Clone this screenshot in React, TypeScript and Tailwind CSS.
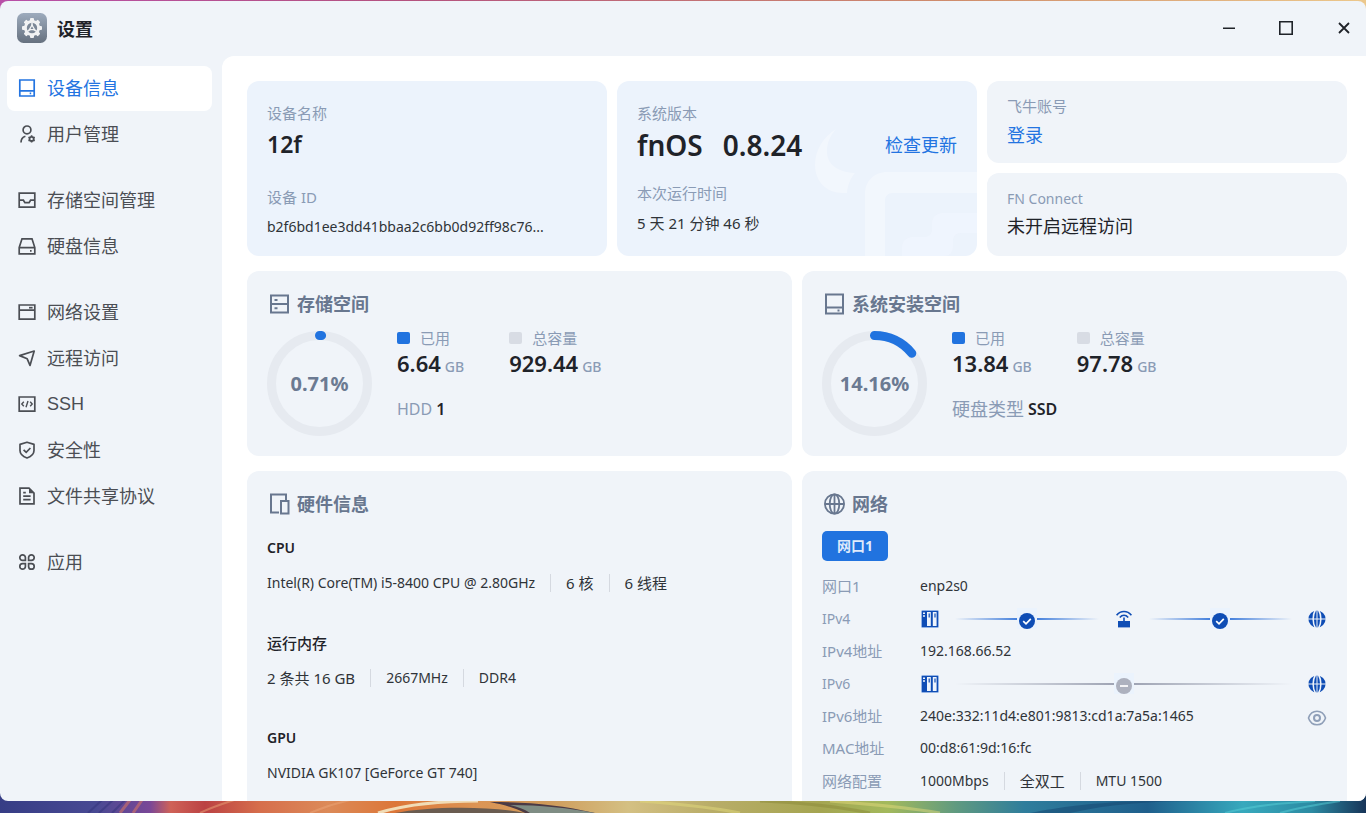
import type { ReactNode } from "react";

type IconProps = { children: ReactNode; className?: string };

function Icon({ children, className = "size-[18px]" }: IconProps) {
  return (
    <svg
      viewBox="0 0 18 18"
      className={`shrink-0 ${className}`}
      fill="none"
      stroke="currentColor"
      strokeWidth="1.7"
      aria-hidden="true"
    >
      {children}
    </svg>
  );
}

const icons = {
  device: (
    <Icon>
      <path d="M1.8 1h14.4v16H1.8zM1.8 11.8h14.4" />
      <path d="M11.7 14.4h1.5" />
    </Icon>
  ),
  user: (
    <Icon>
      <circle cx="9" cy="4.9" r="3.9" />
      <path d="M3 17.6c0-3.4 1.6-5.6 4.4-6.4" />
      <circle cx="13.6" cy="13.9" r="2.1" strokeWidth="1.8" />
      <path
        strokeWidth="1.6"
        d="M13.6 10.3v1.2M13.6 16.3v1.2M10.5 12.1l1 .6M15.7 15.1l1 .6M10.5 15.7l1-.6M15.7 12.7l1-.6"
      />
    </Icon>
  ),
  inbox: (
    <Icon>
      <path d="M1.2 2.2h15.6v14H1.2z" />
      <path d="M1.2 9.2h4.2l1.5 2.4h4.2l1.5-2.4h4.2" />
    </Icon>
  ),
  disk: (
    <Icon>
      <path d="M1.2 10.6 4 1.8h10l2.8 8.8v6.2H1.2zM1.2 10.6h15.6" />
      <path d="M12 13.8h1.6" />
    </Icon>
  ),
  window: (
    <Icon>
      <path d="M1.2 2h15.6v14.2H1.2zM1.2 7.2h15.6" />
      <path d="M11 4.7h3.6" />
    </Icon>
  ),
  send: (
    <Icon>
      <path d="M1.6 6.6 16.2 2 12 16.4 9.2 9.8z" strokeLinejoin="round" />
    </Icon>
  ),
  code: (
    <Icon>
      <path d="M1.2 2h15.6v14.2H1.2z" />
      <path d="M5.8 6.8 3.8 9l2 2.2M12.2 6.8l2 2.2-2 2.2M10 6l-2 6.2" strokeWidth="1.4" />
    </Icon>
  ),
  shield: (
    <Icon>
      <path d="M9 1.2 16 3.4v6c0 3.6-3 6-7 7.6-4-1.6-7-4-7-7.6v-6z" strokeLinejoin="round" />
      <path d="M5.6 8.8 8.2 11.4l4.2-4.4" />
    </Icon>
  ),
  file: (
    <Icon>
      <path d="M2 1.2h9l5 5v10.6H2z" />
      <path d="M11 1.4v4.8h4.8z" fill="currentColor" stroke="none" />
      <path d="M5.2 5.6h2.6M5.2 9.2h7.4M5.2 12.6h7.4" />
    </Icon>
  ),
  apps: (
    <Icon>
      <path d="M7.4 7.4H4.6A2.8 2.8 0 1 1 7.4 4.6zM10.6 7.4V4.6a2.8 2.8 0 1 1 2.8 2.8zM7.4 10.6v2.8a2.8 2.8 0 1 1-2.8-2.8zM10.6 10.6h2.8a2.8 2.8 0 1 1-2.8 2.8z" />
    </Icon>
  ),
};

const navGroups: { label: string; icon: ReactNode; active?: boolean; latin?: boolean }[][] = [
  [
    { label: "设备信息", icon: icons.device, active: true },
    { label: "用户管理", icon: icons.user },
  ],
  [
    { label: "存储空间管理", icon: icons.inbox },
    { label: "硬盘信息", icon: icons.disk },
  ],
  [
    { label: "网络设置", icon: icons.window },
    { label: "远程访问", icon: icons.send },
    { label: "SSH", icon: icons.code, latin: true },
    { label: "安全性", icon: icons.shield },
    { label: "文件共享协议", icon: icons.file },
  ],
  [{ label: "应用", icon: icons.apps }],
];

function Wallpaper() {
  return (
    <svg
      className="absolute inset-0 size-full"
      viewBox="0 0 1366 813"
      preserveAspectRatio="none"
      aria-hidden="true"
    >
      <defs>
        <linearGradient id="sky">
          <stop offset="0" stopColor="#b84fa8" />
          <stop offset=".3" stopColor="#b4527f" />
          <stop offset=".7" stopColor="#cf8d6c" />
          <stop offset="1" stopColor="#ecc88c" />
        </linearGradient>
        <linearGradient id="ground">
          <stop offset="0" stopColor="#363d85" />
          <stop offset=".07" stopColor="#484993" />
          <stop offset=".11" stopColor="#7a4797" />
          <stop offset=".125" stopColor="#cf6257" />
          <stop offset=".15" stopColor="#bb4243" />
          <stop offset=".19" stopColor="#d66e4c" />
          <stop offset=".24" stopColor="#dc8a58" />
          <stop offset=".29" stopColor="#dc7638" />
          <stop offset=".35" stopColor="#dc9555" />
          <stop offset=".4" stopColor="#cf9a5a" />
          <stop offset=".46" stopColor="#d4c083" />
          <stop offset=".52" stopColor="#b9ad68" />
          <stop offset=".6" stopColor="#a5a551" />
          <stop offset=".65" stopColor="#a3b95c" />
          <stop offset=".7" stopColor="#5f9a80" />
          <stop offset=".75" stopColor="#2f7d9c" />
          <stop offset=".84" stopColor="#1f5f8c" />
          <stop offset=".91" stopColor="#37a9bd" />
          <stop offset=".96" stopColor="#2c8ba3" />
          <stop offset="1" stopColor="#173458" />
        </linearGradient>
      </defs>
      <rect width="1366" height="400" fill="url(#sky)" />
      <rect y="400" width="1366" height="413" fill="url(#ground)" />
      <g fill="none" opacity=".5">
        <path d="M88 813l14-13M99 813l14-13M112 813l13-13" stroke="#33337c" strokeWidth="2" />
        <path d="M120 813l10-13M133 813l9-13" stroke="#e67a5c" strokeWidth="3" />
        <path d="M200 813c12-6 22-9 34-13M310 813c14-6 22-9 40-13" stroke="#eba578" strokeWidth="2" />
        <path d="M640 801c40 3 70 6 100 12M830 801c40 3 80 7 110 12" stroke="#e2da7c" strokeWidth="3" />
        <path d="M760 801c50 2 80 6 110 12" stroke="#8c8a3a" strokeWidth="3" />
        <path d="M1225 813c30-8 60-10 90-12M1280 813c20-6 40-9 60-12" stroke="#57d0d8" strokeWidth="2" />
      </g>
      <path d="M378 813c26-8 58-12 100-12" fill="none" stroke="#f1dcb6" strokeWidth="3" />
      <path d="M395 813c30-6 90-8 130 0z" fill="#6a5c50" />
      <path d="M490 802c40 0 70 3 105 11h-70c-10-5-20-8-35-11z" fill="#4b3a44" />
      <path d="M530 813c-6-4-12-6-20-8 30 0 60 3 85 8z" fill="#7f8d84" />
      <path d="M1070 813c40-9 80-12 130-12h-60c-50 2-80 6-110 12z" fill="#174b74" opacity=".6" />
    </svg>
  );
}

function AppLogo() {
  return (
    <svg viewBox="0 0 30 30" className="size-[30px] shrink-0" aria-hidden="true">
      <defs>
        <linearGradient id="logo" x1="0" y1="0" x2="0" y2="1">
          <stop offset="0" stopColor="#9dabbd" />
          <stop offset="1" stopColor="#66717f" />
        </linearGradient>
      </defs>
      <rect width="30" height="30" rx="6.5" fill="url(#logo)" />
      <g fill="#f1f2f3">
        {[0, 45, 90, 135].map((angle) => (
          <rect key={angle} x="13" y="5" width="4" height="20" rx="1" transform={`rotate(${angle} 15 15)`} />
        ))}
        <circle cx="15" cy="15" r="8" />
      </g>
      <circle cx="15" cy="15" r="5.2" fill="#7c8897" />
      <path d="M15 9.6v4M10.4 18.4l3-2M19.6 18.4l-3-2" stroke="#f1f2f3" strokeWidth="1.5" />
      <path d="M15 12l2.6 4.6h-5.2z" fill="none" stroke="#f1f2f3" strokeWidth="1.3" />
    </svg>
  );
}

function TitleBar() {
  return (
    <header className="flex h-[55px] shrink-0 items-center pb-0.5 pl-[17px]">
      <AppLogo />
      <h1 className="ml-2.5 pt-0.5 text-lg leading-6 font-bold text-[#1f2329]">设置</h1>
      <div className="ml-auto flex items-center text-[#1f2329]">
        <button type="button" aria-label="最小化" className="flex h-10 w-[57px] items-center justify-center">
          <svg viewBox="0 0 16 16" className="size-4" stroke="currentColor" strokeWidth="1.6" fill="none">
            <path d="M2 8.2h12" />
          </svg>
        </button>
        <button type="button" aria-label="最大化" className="flex h-10 w-[57px] items-center justify-center">
          <svg viewBox="0 0 16 16" className="size-4" stroke="currentColor" strokeWidth="1.6" fill="none">
            <path d="M1.8 1.8h12.4v12.4H1.8z" />
          </svg>
        </button>
        <button type="button" aria-label="关闭" className="flex h-10 w-[52px] items-center justify-center pl-2">
          <svg viewBox="0 0 16 16" className="size-4" stroke="currentColor" strokeWidth="1.8" fill="none">
            <path d="M3 3l10 10M13 3L3 13" />
          </svg>
        </button>
      </div>
    </header>
  );
}

function Sidebar() {
  return (
    <nav className="flex w-[222px] shrink-0 flex-col gap-[21px] overflow-hidden pt-2.5 pr-2.5 pl-[7px]">
      {navGroups.map((group, index) => (
        <ul key={index} className="flex flex-col gap-px">
          {group.map((item) => (
            <li key={item.label}>
              <a
                href="#"
                aria-current={item.active ? "page" : undefined}
                className={`flex h-[45px] items-center gap-[11px] rounded-lg pb-px pl-[11px] text-lg ${
                  item.active ? "bg-white text-[#2374e1]" : "text-[#4b4e54]"
                }`}
              >
                {item.icon}
                <span className={item.latin ? "font-['Liberation_Sans',sans-serif]" : ""}>{item.label}</span>
              </a>
            </li>
          ))}
        </ul>
      ))}
    </nav>
  );
}

function Label({ children }: { children: ReactNode }) {
  return <div className="text-[15px] leading-5 text-[#8a9bb5]">{children}</div>;
}

function Watermark() {
  return (
    <svg
      viewBox="0 0 360 175"
      className="pointer-events-none absolute right-0 bottom-0 h-[175px] w-[360px]"
      aria-hidden="true"
    >
      <g fill="#ffffff" fillOpacity=".32">
        <path d="M219 48c-13 8-21 21-21 36 0 17 12 28 27 28h5c1-8 3-14 8-20-18-1-28-9-28-22 0-8 3-15 9-22z" />
        <path d="M248 175v-62c0-13 9-22 22-22h90v21h-84c-5 0-8 3-8 8v55z" />
      </g>
      <path
        d="M285 175v-8c0-7 4-11 11-11h11c5 0 8-3 8-8v-5c0-7 4-11 11-11h34v20h-16c-5 0-8 3-8 8v5c0 6-3 10-9 10z"
        fill="#f3f6ff"
        fillOpacity=".55"
      />
    </svg>
  );
}

function Overview() {
  return (
    <section className="grid grid-cols-3 gap-2.5">
      <div className="min-w-0 rounded-xl bg-[#ecf3fc] px-5 pt-[22px] pb-[17px]">
        <Label>设备名称</Label>
        <div className="mt-[3px] text-[23px] leading-9 font-semibold text-[#1f2329]">12f</div>
        <div className="mt-[25px]">
          <Label>设备 ID</Label>
        </div>
        <div className="mt-2 truncate text-sm leading-6 text-[#2f3338]">
          b2f6bd1ee3dd41bbaa2c6bb0d92ff98c76...
        </div>
      </div>

      <div className="relative min-w-0 overflow-hidden rounded-xl bg-[#ecf3fc] px-5 pt-[22px] pb-[17px]">
        <Watermark />
        <Label>系统版本</Label>
        <div className="mt-0.5 flex items-center justify-between leading-10">
          <div className="flex gap-5 text-[28px] font-semibold text-[#1f2329]">
            <span>fnOS</span>
            <span>0.8.24</span>
          </div>
          <button type="button" className="relative text-lg leading-6 text-[#2374e1]">
            检查更新
          </button>
        </div>
        <div className="mt-[18px]">
          <Label>本次运行时间</Label>
        </div>
        <div className="mt-2 text-[15px] leading-6 text-[#2f3338]">5 天 21 分钟 46 秒</div>
      </div>

      <div className="flex min-w-0 flex-col gap-2.5">
        <div className="flex-1 rounded-xl bg-[#f0f4f9] px-5 pt-[15px]">
          <Label>飞牛账号</Label>
          <button type="button" className="mt-[7px] block text-lg leading-6 text-[#2374e1]">
            登录
          </button>
        </div>
        <div className="flex-1 rounded-xl bg-[#f0f4f9] px-5 pt-4">
          <div className="text-sm leading-5 text-[#8a9bb5]">FN Connect</div>
          <div className="mt-[5px] text-lg leading-6 text-[#1f2329]">未开启远程访问</div>
        </div>
      </div>
    </section>
  );
}

function CardTitle({ icon, children }: { icon: ReactNode; children: ReactNode }) {
  return (
    <h2 className="flex h-6 items-center gap-1.5 text-lg leading-6 font-bold text-[#68778f]">
      <svg
        viewBox="0 0 24 24"
        className="size-6 shrink-0"
        fill="none"
        stroke="currentColor"
        strokeWidth="2"
        aria-hidden="true"
      >
        {icon}
      </svg>
      {children}
    </h2>
  );
}

function Ring({ percent, shown }: { percent: number; shown: string }) {
  return (
    <div className="grid size-[105px] shrink-0 place-items-center">
      <svg
        viewBox="0 0 105 105"
        className="col-start-1 row-start-1 size-full"
        fill="none"
        strokeWidth="9"
        aria-hidden="true"
      >
        <circle cx="52.5" cy="52.5" r="48" stroke="#e6eaf0" />
        <circle
          cx="52.5"
          cy="52.5"
          r="48"
          stroke="#2173df"
          strokeLinecap="round"
          pathLength="100"
          strokeDasharray={`${percent} 100`}
          transform="rotate(-90 52.5 52.5)"
        />
      </svg>
      <span className="col-start-1 row-start-1 text-xl leading-6 font-bold text-[#6b7a92]">{shown}</span>
    </div>
  );
}

function Stat({ label, value, used }: { label: string; value: string; used?: boolean }) {
  return (
    <div>
      <div className="flex h-3.5 items-center gap-2.5 text-[15px] text-[#8a9bb5]">
        <span className={`h-3 w-[13px] rounded-[2px] ${used ? "bg-[#2173df]" : "bg-[#d8dce4]"}`} />
        {label}
      </div>
      <div className="mt-0.5 flex items-baseline gap-1 text-[22px] leading-8 font-semibold text-[#1f2329]">
        {value}
        <span className="text-sm font-medium text-[#8a9bb5]">GB</span>
      </div>
    </div>
  );
}

type SpaceCardProps = {
  title: string;
  icon: ReactNode;
  percent: number;
  shown: string;
  used: string;
  total: string;
  footer: ReactNode;
};

function SpaceCard({ title, icon, percent, shown, used, total, footer }: SpaceCardProps) {
  return (
    <section className="min-w-0 rounded-xl bg-[#f0f4f9] px-5 pt-[21px] pb-5">
      <CardTitle icon={icon}>{title}</CardTitle>
      <div className="mt-[15px] flex gap-[25px]">
        <Ring percent={percent} shown={shown} />
        <div>
          <div className="flex gap-[45px]">
            <Stat label="已用" value={used} used />
            <Stat label="总容量" value={total} />
          </div>
          <div className="mt-[18px] flex items-center gap-1 leading-6">{footer}</div>
        </div>
      </div>
    </section>
  );
}

type Part = { text: string; latin?: boolean };

function Parts({ items }: { items: Part[] }) {
  return (
    <div className="flex h-5 items-center text-[#2f3338]">
      {items.map((item, index) => (
        <div key={item.text} className="flex items-center">
          {index > 0 && <span className="mx-[15px] h-[18px] w-px bg-[#d5d9e0]" />}
          <span className={item.latin ? "text-sm leading-5" : "text-[15px] leading-5"}>{item.text}</span>
        </div>
      ))}
    </div>
  );
}

const hardware: { name: string; latin?: boolean; parts: Part[] }[] = [
  {
    name: "CPU",
    latin: true,
    parts: [
      { text: "Intel(R) Core(TM) i5-8400 CPU @ 2.80GHz", latin: true },
      { text: "6 核" },
      { text: "6 线程" },
    ],
  },
  {
    name: "运行内存",
    parts: [{ text: "2 条共 16 GB" }, { text: "2667MHz", latin: true }, { text: "DDR4", latin: true }],
  },
  { name: "GPU", latin: true, parts: [{ text: "NVIDIA GK107 [GeForce GT 740]", latin: true }] },
];

function HardwareCard() {
  return (
    <section className="min-w-0 rounded-xl bg-[#f0f4f9] px-5 pt-[21px] pb-10">
      <CardTitle icon={<path d="M12 20.5H4v-18h15v6M14 9h7.5v12.500H14z" />}>硬件信息</CardTitle>
      <dl className="mt-[22px] flex flex-col gap-10">
        {hardware.map((item) => (
          <div key={item.name}>
            <dt
              className={`leading-5 text-[#1f2329] ${
                item.latin ? "text-sm font-semibold" : "text-[15px] font-medium"
              }`}
            >
              {item.name}
            </dt>
            <dd className="mt-[15px]">
              <Parts items={item.parts} />
            </dd>
          </div>
        ))}
      </dl>
    </section>
  );
}

function ServerIcon() {
  return (
    <svg viewBox="0 0 20 20" className="size-5 shrink-0" aria-hidden="true">
      <rect x="1" y="1" width="18" height="18" rx="1.5" fill="#b4cdf2" />
      <rect x="1.8" y="1.8" width="16.4" height="16.4" fill="#0f4db5" />
      <path d="M7 3h3.8v14H7zM12.8 3h3.8v14h-3.8z" fill="#eef4fc" />
      <path d="M9.2 4.4v4M15 4.4v4" stroke="#0f4db5" strokeWidth="1.2" />
      <path d="M3 4.2h2M3 7h2" stroke="#eef4fc" strokeWidth="1.4" />
    </svg>
  );
}

function RouterIcon() {
  return (
    <svg
      viewBox="0 0 20 20"
      className="size-5 shrink-0"
      fill="none"
      stroke="#0f4db5"
      strokeWidth="1.6"
      aria-hidden="true"
    >
      <path d="M2.6 6.2c4-5 10.8-5 14.8 0M5.8 8.4c2.4-2.8 6-2.8 8.4 0" />
      <path d="M10 8.6v4" />
      <path d="M4 12h12v6.4H4z" fill="#0f4db5" stroke="none" />
    </svg>
  );
}

function SolidGlobe() {
  return (
    <svg viewBox="0 0 20 20" className="size-5 shrink-0" aria-hidden="true">
      <circle cx="10" cy="10" r="8.6" fill="#0f4db5" />
      <path d="M1 10h18M10 1v18" stroke="#f0f4f9" strokeWidth="1" />
      <path
        d="M8.400 1c-3 5-3 13 0 18M11.600 1c3 5 3 13 0 18"
        fill="none"
        stroke="#f0f4f9"
        strokeWidth="1.5"
      />
    </svg>
  );
}

function Link({ ok }: { ok: boolean }) {
  return (
    <div className="flex h-5 flex-1 items-center">
      <span className={`h-0.5 flex-1 bg-linear-to-r from-transparent ${ok ? "to-[#4580dc]" : "to-[#9fa4b4]"}`} />
      <span className="w-5 bg-[#ebf3fd] px-0.5 pt-[5px]">
        <svg viewBox="0 0 16 16" className="size-4" fill="none" stroke="#ffffff" aria-hidden="true">
          <circle cx="8" cy="8" r="8" fill={ok ? "#0f4db5" : "#adb1be"} stroke="none" />
          {ok ? <path d="M4.2 8.2 7 10.8l4.8-5" strokeWidth="1.7" /> : <path d="M4 8h8" strokeWidth="1.7" />}
        </svg>
      </span>
      <span className={`h-0.5 flex-1 bg-linear-to-l from-transparent ${ok ? "to-[#4580dc]" : "to-[#9fa4b4]"}`} />
    </div>
  );
}

type RowProps = { label: string; tall?: boolean; latin?: boolean; children: ReactNode };

function Row({ label, tall, latin, children }: RowProps) {
  return (
    <div className={`flex items-center ${tall ? "h-[33px]" : "h-8"}`}>
      <dt className={`w-[98px] shrink-0 leading-5 text-[#8a9bb5] ${latin ? "text-sm" : "text-[15px]"}`}>
        {label}
      </dt>
      <dd className="min-w-0 flex-1 text-sm leading-5 text-[#2f3338]">{children}</dd>
    </div>
  );
}

function NetworkCard() {
  return (
    <section className="min-w-0 rounded-xl bg-[#f0f4f9] px-5 pt-[21px] pb-10">
      <CardTitle
        icon={
          <g strokeWidth="1.8">
            <circle cx="12.500" cy="12" r="9.600" />
            <path d="M3 12h19M12.500 2.400v19.200" />
            <ellipse cx="12.500" cy="12" rx="4.800" ry="9.600" />
          </g>
        }
      >
        网络
      </CardTitle>
      <button
        type="button"
        className="mt-[15px] flex h-[30px] w-[66px] items-center justify-center rounded-[5px] bg-[#2173df] text-sm font-bold text-[#dfeafb]"
      >
        网口1
      </button>
      <dl className="mt-[9px]">
        <Row label="网口1">enp2s0</Row>
        <Row label="IPv4" tall latin>
          <div className="flex items-center gap-[15px]">
            <ServerIcon />
            <Link ok />
            <RouterIcon />
            <Link ok />
            <SolidGlobe />
          </div>
        </Row>
        <Row label="IPv4地址">192.168.66.52</Row>
        <Row label="IPv6" tall latin>
          <div className="flex items-center gap-[15px]">
            <ServerIcon />
            <Link ok={false} />
            <SolidGlobe />
          </div>
        </Row>
        <Row label="IPv6地址">
          <div className="flex items-center justify-between">
            240e:332:11d4:e801:9813:cd1a:7a5a:1465
            <button type="button" aria-label="隐藏地址" className="pt-1">
              <svg viewBox="0 0 20 20" className="size-5" fill="none" stroke="#8f9fb8" strokeWidth="1.6">
                <path d="M1.5 10C3 5.400 6.400 3.200 10 3.200s7 2.200 8.500 6.800c-1.500 4.600-4.900 6.800-8.500 6.800S3 14.600 1.500 10z" />
                <circle cx="10" cy="10" r="3" strokeWidth="2" />
              </svg>
            </button>
          </div>
        </Row>
        <Row label="MAC地址">00:d8:61:9d:16:fc</Row>
        <Row label="网络配置" tall>
          <Parts
            items={[
              { text: "1000Mbps", latin: true },
              { text: "全双工" },
              { text: "MTU 1500", latin: true },
            ]}
          />
        </Row>
      </dl>
    </section>
  );
}

export default function App() {
  return (
    <div
      className="relative h-screen overflow-hidden pt-px pb-3 font-['Noto_Sans','Noto_Sans_CJK_SC',sans-serif]"
      lang="zh-CN"
    >
      <Wallpaper />
      <div className="relative flex h-full flex-col overflow-hidden rounded-lg bg-[#f0f4f9]">
        <TitleBar />
        <div className="flex min-h-0 flex-1">
          <Sidebar />
          <main className="flex min-w-0 flex-1 flex-col gap-[15px] overflow-y-auto rounded-tl-xl bg-white pt-[25px] pr-[19px] pb-5 pl-[25px] [scrollbar-width:none]">
            <Overview />
            <div className="grid grid-cols-2 gap-2.5">
              <SpaceCard
                title="存储空间"
                icon={
                  <>
                    <path d="M4 3.500h17v17H4zM4 12h17" />
                    <path d="M7.500 8h3M7.500 16.200h3" />
                  </>
                }
                percent={0.71}
                shown="0.71%"
                used="6.64"
                total="929.44"
                footer={
                  <>
                    <span className="text-base leading-6 text-[#8a9bb5]">HDD</span>
                    <span className="text-base leading-6 font-semibold text-[#1f2329]">1</span>
                  </>
                }
              />
              <SpaceCard
                title="系统安装空间"
                icon={
                  <>
                    <path d="M4 2.500h17v19H4zM4 15.500h17" />
                    <path d="M15.500 18.500h2" />
                  </>
                }
                percent={14.16}
                shown="14.16%"
                used="13.84"
                total="97.78"
                footer={
                  <>
                    <span className="text-lg leading-6 text-[#8a9bb5]">硬盘类型</span>
                    <span className="text-base leading-6 font-semibold text-[#1f2329]">SSD</span>
                  </>
                }
              />
            </div>
            <div className="grid grid-cols-2 gap-2.5">
              <HardwareCard />
              <NetworkCard />
            </div>
          </main>
        </div>
      </div>
    </div>
  );
}
